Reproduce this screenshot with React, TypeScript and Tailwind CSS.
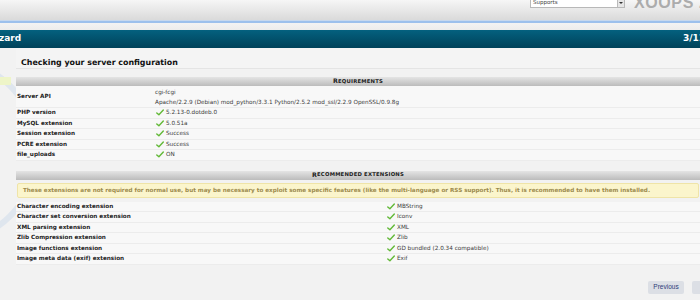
import React from "react";

const Check = () => (
  <svg width="8" height="7" viewBox="0 0 8 7" className="mr-[2px] shrink-0">
    <path d="M0.8 3.9 L2.9 5.8 L7.3 1.1" fill="none" stroke="#62b937" strokeWidth="1.4" strokeLinecap="round" strokeLinejoin="round" />
  </svg>
);

const reqs: { label: string; value: string }[] = [
  { label: "PHP version", value: "5.2.13-0.dotdeb.0" },
  { label: "MySQL extension", value: "5.0.51a" },
  { label: "Session extension", value: "Success" },
  { label: "PCRE extension", value: "Success" },
  { label: "file_uploads", value: "ON" },
];

const recs = [
  ["Character encoding extension", "MBString"],
  ["Character set conversion extension", "Iconv"],
  ["XML parsing extension", "XML"],
  ["Zlib Compression extension", "Zlib"],
  ["Image functions extension", "GD bundled (2.0.34 compatible)"],
  ["Image meta data (exif) extension", "Exif"],
];

const SectionBar = ({ children }: { children: React.ReactNode }) => (
  <div className="h-[9px] flex items-center justify-center bg-gradient-to-b from-[#e4e4e4] via-[#d0d0d0] to-[#bcbcbc] text-[6.3px] font-bold text-[#222] tracking-[0.2px] leading-none">
    {children}
  </div>
);

export default function App() {
  return (
    <div className="w-[700px] h-[300px] overflow-hidden bg-[#f2f2f2] relative" style={{ fontFamily: '"DejaVu Sans", Verdana, sans-serif' }}>
      {/* top header */}
      <div className="h-[20px] bg-gradient-to-b from-[#f6f6f6] to-[#dadada] relative">
        <div className="absolute left-[530px] top-[-2px] w-[95px] h-[10px] bg-white border border-[#b8b8b8] flex items-center">
          <span className="text-[5.5px] text-[#444] pl-[2px] leading-none">Supports</span>
          <div className="ml-auto w-[7px] h-[8px] bg-[#e6e6e6] border-l border-[#bbb] flex items-center justify-center">
            <div className="w-0 h-0 border-l-[2px] border-r-[2px] border-t-[2px] border-l-transparent border-r-transparent border-t-[#333]" />
          </div>
        </div>
        <div className="absolute left-[634px] top-[-5.5px] text-[16px] font-bold text-[#acacac] whitespace-nowrap leading-none tracking-[0.6px]" style={{ fontFamily: '"Liberation Sans", Arial, sans-serif' }}>
          XOOPS 2.5
        </div>
      </div>
      <div className="h-[1px] bg-[#c6d8ee]" />
      <div className="h-[2px] bg-[#9cc0ec]" />
      <div className="h-[7px] bg-gradient-to-b from-[#f3f3f3] to-[#ececec]" />
      <div className="h-[18px] bg-gradient-to-b from-[#04617f] to-[#00425a] flex items-center justify-between text-white font-bold text-[9px]">
        <span className="ml-[-1px]">zard</span>
        <span className="mr-[-5px]">3/11</span>
      </div>

      {/* body */}
      <div className="flex relative">
        {/* left decoration */}
        <div className="w-[16px] shrink-0 relative h-[252px] overflow-hidden">
          <div className="absolute left-[-150px] top-[8px] w-[190px] h-[190px] rounded-full border-[6px] border-[#dfe6ee]" />
          <div className="absolute left-0 top-[29px] w-[11px] h-[8px] bg-[#eef5c8]" />
        </div>
        <div className="flex-1 flex flex-col">
          <div className="h-[21px] flex items-end border-b border-[#e4e4e4] pl-[5px] pb-[1px] bg-[#f4f4f4]">
            <span className="text-[7.9px] font-bold text-[#111] leading-none">Checking your server configuration</span>
          </div>
          <div className="h-[8px]" />
          <SectionBar>R<span className="text-[5.3px]">EQUIREMENTS</span></SectionBar>
          <div className="bg-[#f8f8f8]">
            <div className="flex h-[22px] items-center border-b border-[#ececec] text-[5.7px]">
              <div className="w-[139px] pl-[1px] font-bold text-[#222]">Server API</div>
              <div className="text-[#3a3a3a] leading-[10px]">
                <div>cgi-fcgi</div>
                <div>Apache/2.2.9 (Debian) mod_python/3.3.1 Python/2.5.2 mod_ssl/2.2.9 OpenSSL/0.9.8g</div>
              </div>
            </div>
            {reqs.map((r) => (
              <div key={r.label} className="flex h-[10.5px] items-center border-b border-[#ececec] text-[5.7px]">
                <div className="w-[140px] pl-[1px] font-bold text-[#222]">{r.label}</div>
                <div className="flex items-center text-[#3a3a3a]">
                  <Check />
                  {r.value}
                </div>
              </div>
            ))}
          </div>
          <div className="h-[10px]" />
          <SectionBar>R<span className="text-[5.3px]">ECOMMENDED EXTENSIONS</span></SectionBar>
          <div className="mt-[3px] mx-[1px] h-[15px] bg-[#fbf5cc] border border-[#efe4a8] rounded-[2px] flex items-center pl-[5px] text-[5.65px] font-bold text-[#9c8a4c] whitespace-nowrap">
            These extensions are not required for normal use, but may be necessary to exploit some specific features (like the multi-language or RSS support). Thus, it is recommended to have them installed.
          </div>
          <div className="bg-[#f8f8f8] mt-[4px]">
            {recs.map(([l, v]) => (
              <div key={l} className="flex h-[10.5px] items-center border-b border-[#ececec] text-[5.7px]">
                <div className="w-[371px] pl-[1px] font-bold text-[#222]">{l}</div>
                <div className="flex items-center text-[#3a3a3a]">
                  <Check />
                  {v}
                </div>
              </div>
            ))}
          </div>
          <div className="flex justify-end mt-[16px] gap-[8px] mr-[-22px]">
            <button className="h-[13px] w-[36px] bg-[#dcdfe5] rounded-[2px] text-[6.5px] text-[#2c3c78] leading-none" style={{ fontFamily: '"Liberation Sans", Arial, sans-serif' }}>Previous</button>
            <button className="h-[13px] w-[30px] bg-[#dcdfe5] rounded-[2px] text-[6.5px] text-[#2c3c78] leading-none" style={{ fontFamily: '"Liberation Sans", Arial, sans-serif' }}>Next</button>
          </div>
        </div>
      </div>
    </div>
  );
}
